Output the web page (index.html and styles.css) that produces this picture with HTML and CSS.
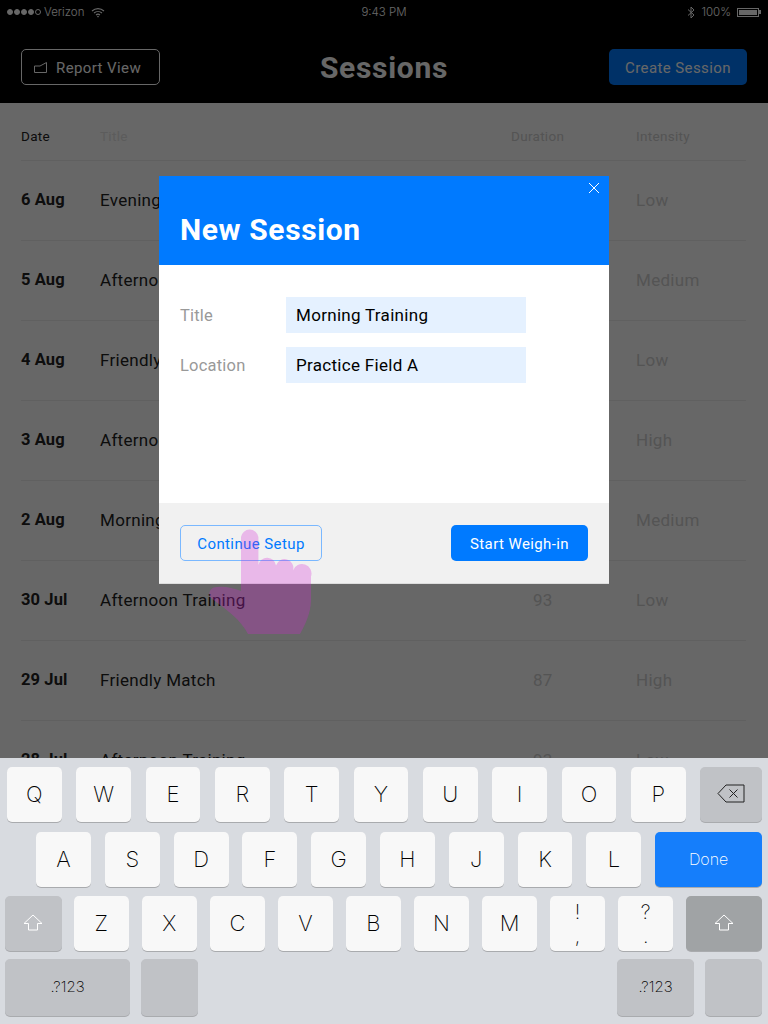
FILE: index.html
```html
<!DOCTYPE html>
<html lang="en">
<head>
  <meta charset="UTF-8" />
  <meta name="viewport" content="width=device-width, initial-scale=1.0"/>
  <title>Sessions</title>
  <link rel="stylesheet" href="styles.css">
</head>
<body>

<div class="screen">

  <!-- Status bar -->
  <div class="status-bar">
    <div class="status-left">
      <span class="signal"><i></i><i></i><i></i><i></i><i class="off"></i></span>
      <span>Verizon</span>
      <svg class="wifi" width="14" height="11" viewBox="0 0 14 11" fill="none" stroke="#fff" stroke-width="1.1">
        <path d="M1 4 C4.5 .8 9.5 .8 13 4"/>
        <path d="M3 6 C5.3 4 8.7 4 11 6"/>
        <path d="M5 8 C6.2 7 7.8 7 9 8"/>
        <circle cx="7" cy="9.6" r=".8" fill="#fff" stroke="none"/>
      </svg>
    </div>
    <div class="status-time">9:43 PM</div>
    <div class="status-right">
      <svg width="8" height="13" viewBox="0 0 8 13" fill="none" stroke="#fff" stroke-width="1">
        <path d="M1 3.5 L7 9 L4 12 V1 L7 4 L1 9.5"/>
      </svg>
      <span>100%</span>
      <span class="battery"><i></i></span>
    </div>
  </div>

  <!-- Header -->
  <header class="top-bar">
    <button class="btn-report">
      <svg width="13" height="11" viewBox="0 0 13 11" fill="none" stroke="#fff" stroke-width="1">
        <path d="M.5 4 L6 4 L12.5 .5 V10.5 H.5 Z"/>
      </svg>
      Report View
    </button>
    <h1>Sessions</h1>
    <button class="btn-create">Create Session</button>
  </header>

  <!-- Sessions list -->
  <div class="sessions">
    <div class="row head">
      <span class="date">Date</span>
      <span>Title</span>
      <span class="dim">Duration</span>
      <span class="dim">Intensity</span>
    </div>
    <div class="row">
      <span class="date">6 Aug</span><span>Evening</span><span></span><span class="dim">Low</span>
    </div>
    <div class="row">
      <span class="date">5 Aug</span><span>Afternoon</span><span></span><span class="dim">Medium</span>
    </div>
    <div class="row">
      <span class="date">4 Aug</span><span>Friendly</span><span></span><span class="dim">Low</span>
    </div>
    <div class="row">
      <span class="date">3 Aug</span><span>Afternoon</span><span></span><span class="dim">High</span>
    </div>
    <div class="row">
      <span class="date">2 Aug</span><span>Morning</span><span></span><span class="dim">Medium</span>
    </div>
    <div class="row">
      <span class="date">30 Jul</span><span>Afternoon Training</span><span class="dim num">93</span><span class="dim">Low</span>
    </div>
    <div class="row">
      <span class="date">29 Jul</span><span>Friendly Match</span><span class="dim num">87</span><span class="dim">High</span>
    </div>
    <div class="row">
      <span class="date">28 Jul</span><span>Afternoon Training</span><span class="dim num">93</span><span class="dim">Low</span>
    </div>
  </div>

  <div class="scrim"></div>

  <!-- New session dialog -->
  <div class="modal">
    <div class="modal-head">
      <svg class="modal-close" width="12" height="12" viewBox="0 0 12 12" stroke="#fff" stroke-width="1">
        <path d="M1 1 L11 11 M11 1 L1 11"/>
      </svg>
      <h2>New Session</h2>
    </div>
    <div class="modal-body">
      <div class="form-group">
        <label>Title</label>
        <div class="field">Morning Training</div>
      </div>
      <div class="form-group">
        <label>Location</label>
        <div class="field">Practice Field A</div>
      </div>
    </div>
    <div class="modal-foot">
      <button class="btn-outline">Continue Setup</button>
      <button class="btn-primary">Start Weigh-in</button>
    </div>
  </div>

  <!-- Touch hint -->
  <svg class="hand" width="110" height="112" viewBox="0 0 110 112">
    <path d="M36 66 L36 12 A8.8 8.8 0 0 1 53.4 12 L53.4 40 A8.9 8.9 0 0 1 71 40.5 A8.7 8.7 0 0 1 88 45.5 A9 9 0 0 1 106 51.5 L106 75 C106 88 100 100 95 109 L43 109 C36 95 22 85 6 73 C3 70 4 62 12 62 C20 61 28 63 36 66 Z"/>
  </svg>

  <!-- Keyboard -->
  <div class="keyboard">
    <div class="key-row row-1">
      <div class="key">Q</div><div class="key">W</div><div class="key">E</div><div class="key">R</div><div class="key">T</div>
      <div class="key">Y</div><div class="key">U</div><div class="key">I</div><div class="key">O</div><div class="key">P</div>
      <div class="key special backspace">
        <svg width="28" height="19" viewBox="0 0 28 19" fill="none" stroke="#222" stroke-width="1">
          <path d="M9 1 H27 V18 H9 L1 9.5 Z"/>
          <path d="M12.5 5.5 L20.5 13.5 M20.5 5.5 L12.5 13.5"/>
        </svg>
      </div>
    </div>
    <div class="key-row row-2">
      <div class="key">A</div><div class="key">S</div><div class="key">D</div><div class="key">F</div><div class="key">G</div>
      <div class="key">H</div><div class="key">J</div><div class="key">K</div><div class="key">L</div>
      <div class="key done">Done</div>
    </div>
    <div class="key-row row-3">
      <div class="key special shift">
        <svg width="20" height="17" viewBox="0 0 20 17" fill="none" stroke="#fff" stroke-width="1">
          <path d="M10 1 L19 9.5 H14.5 V16 H5.5 V9.5 H1 Z"/>
        </svg>
      </div>
      <div class="key">Z</div><div class="key">X</div><div class="key">C</div><div class="key">V</div><div class="key">B</div>
      <div class="key">N</div><div class="key">M</div>
      <div class="key stacked"><span>!</span><span>,</span></div>
      <div class="key stacked"><span>?</span><span>.</span></div>
      <div class="key special shift-on">
        <svg width="20" height="17" viewBox="0 0 20 17" fill="none" stroke="#fff" stroke-width="1">
          <path d="M10 1 L19 9.5 H14.5 V16 H5.5 V9.5 H1 Z"/>
        </svg>
      </div>
    </div>
    <div class="key-row row-4">
      <div class="key special num-left">.?123</div>
      <div class="key special blank"></div>
      <div class="key special num-right">.?123</div>
      <div class="key special blank"></div>
    </div>
  </div>

</div>

</body>
</html>
```

FILE: styles.css
```css
* {
  box-sizing: border-box;
}
body {
  margin: 0;
  font-family: Roboto, "Liberation Sans", sans-serif;
  background-color: #fff;
}
button {
  font-family: inherit;
  letter-spacing: .4px;
}
.screen {
  position: relative;
  width: 768px;
  height: 1024px;
  overflow: hidden;
}

/* status bar */
.status-bar {
  height: 24px;
  background-color: #000;
  color: #fff;
  font-family: Inter, "Liberation Sans", sans-serif;
  font-weight: 300;
  font-size: 11.5px;
  display: flex;
  align-items: center;
  justify-content: space-between;
  padding: 0 9px 0 7px;
  position: relative;
}
.status-left, .status-right {
  display: flex;
  align-items: center;
}
.status-left {
  gap: 3px;
}
.wifi {
  margin-left: 4px;
}
.status-right {
  gap: 6px;
}
.status-time {
  position: absolute;
  left: 0;
  right: 0;
  text-align: center;
}
.signal {
  display: flex;
  gap: 1px;
}
.signal i {
  width: 6px;
  height: 6px;
  border-radius: 50%;
  background-color: #fff;
  border: 1px solid #fff;
}
.signal i.off {
  background-color: transparent;
}
.battery {
  width: 22px;
  height: 9px;
  border: 1px solid #fff;
  padding: 1px;
  position: relative;
}
.battery i {
  display: block;
  height: 100%;
  background-color: #fff;
}
.battery::after {
  content: "";
  position: absolute;
  right: -3px;
  top: 1.5px;
  width: 2px;
  height: 4px;
  background-color: #fff;
}

/* header */
.top-bar {
  height: 79px;
  background-color: #000;
  display: flex;
  align-items: center;
  justify-content: space-between;
  padding: 7px 21px 0;
  position: relative;
}
.top-bar h1 {
  position: absolute;
  left: 0;
  right: 0;
  top: 24px;
  margin: 0;
  text-align: center;
  color: #fff;
  font-size: 30px;
  line-height: 40px;
  font-weight: 700;
  letter-spacing: .7px;
}
.btn-report {
  width: 139px;
  height: 36px;
  background: none;
  border: 1px solid #fff;
  border-radius: 5px;
  color: #fff;
  font-size: 15px;
  display: flex;
  align-items: center;
  gap: 9px;
  padding: 1px 0 0 12px;
}
.btn-create {
  width: 138px;
  height: 36px;
  background-color: #007aff;
  border: none;
  border-radius: 5px;
  color: #fff;
  font-size: 15px;
  padding: 1px 0 0;
}

/* sessions list */
.sessions {
  padding: 0 22px 0 21px;
}
.row {
  display: grid;
  grid-template-columns: 79px 411px 125px 1fr;
  align-items: center;
  height: 80px;
  padding-bottom: 2px;
  border-bottom: 1px solid #eee;
  font-size: 17px;
  color: #222;
  white-space: nowrap;
  letter-spacing: .3px;
}
.row.head {
  height: 58px;
  padding: 9px 0 0;
  font-size: 13.5px;
  color: #e3e3e3;
}
.date {
  font-size: 16.5px;
  font-weight: 700;
  letter-spacing: .1px;
  color: #222;
}
.row.head .date {
  font-size: 13.5px;
  font-weight: 400;
  letter-spacing: .3px;
}
.dim {
  color: #cfcfcf;
}
.num {
  padding-left: 22px;
}

/* dim layer over the page */
.scrim {
  position: absolute;
  top: 0;
  left: 0;
  right: 0;
  bottom: 0;
  background-color: rgba(0, 0, 0, 0.595);
}

/* dialog */
.modal {
  position: absolute;
  left: 159px;
  top: 176px;
  width: 450px;
  height: 408px;
  display: flex;
  flex-direction: column;
  background-color: #fff;
}
.modal-head {
  position: relative;
  height: 89px;
  background-color: #007aff;
  padding: 33px 21px 0;
}
.modal-head h2 {
  margin: 0;
  color: #fff;
  font-size: 30px;
  line-height: 42px;
  font-weight: 700;
  letter-spacing: .6px;
}
.modal-close {
  position: absolute;
  top: 6px;
  right: 9px;
}
.modal-body {
  flex: 1;
  padding: 32px 21px 0;
  display: flex;
  flex-direction: column;
  gap: 14px;
}
.form-group {
  display: flex;
  align-items: center;
}
label {
  width: 106px;
  font-size: 16.5px;
  color: #999;
  letter-spacing: .2px;
}
.field {
  width: 240px;
  height: 36px;
  line-height: 36px;
  padding: 0 10px;
  background-color: #e5f1ff;
  font-size: 17px;
  color: #000;
  letter-spacing: .3px;
}
.modal-foot {
  height: 81px;
  background-color: #f1f1f1;
  border-bottom: 1px solid #ddd;
  display: flex;
  justify-content: space-between;
  padding: 22px 21px 0;
}
.btn-outline, .btn-primary {
  height: 36px;
  border-radius: 5px;
  font-size: 15px;
  padding: 1px 0 0;
}
.btn-outline {
  width: 142px;
  background: none;
  border: 1px solid #7ab8ff;
  color: #007aff;
}
.btn-primary {
  width: 137px;
  background-color: #007aff;
  border: none;
  color: #fff;
}

/* touch hint */
.hand {
  position: absolute;
  left: 205px;
  top: 525px;
  fill: rgba(212, 37, 212, 0.28);
}

/* keyboard */
.keyboard {
  position: absolute;
  left: 0;
  right: 0;
  bottom: 0;
  height: 266px;
  padding-top: 9px;
  background-color: #d8dbe0;
  font-family: Inter, "Liberation Sans", sans-serif;
  font-weight: 250;
  color: #000;
}
.key-row {
  display: flex;
  height: 55px;
}
.row-1 {
  padding: 0 6px 0 7px;
  gap: 14.6px;
  margin-bottom: 10px;
}
.row-2 {
  padding: 0 6px 0 36px;
  gap: 13.9px;
  margin-bottom: 9px;
}
.row-3 {
  padding: 0 6px 0 5px;
  gap: 13.2px;
  margin-bottom: 8px;
}
.row-4 {
  height: 57px;
  padding: 0 6px 0 5px;
}
.key {
  width: 55px;
  height: 100%;
  background-color: #f8f8f8;
  border-radius: 5px;
  box-shadow: 0 1px 0 #a9abae;
  display: flex;
  align-items: center;
  justify-content: center;
  font-size: 22px;
  padding-bottom: 2px;
}
.stacked {
  flex-direction: column;
  font-size: 20px;
  line-height: 24px;
  padding-bottom: 0;
}
.special {
  background-color: #c0c2c6;
}
.backspace {
  width: 62px;
  margin-left: auto;
}
.done {
  width: 107px;
  margin-left: auto;
  background-color: #157efb;
  color: #fff;
  font-size: 16px;
}
.shift {
  width: 57px;
  margin-right: -1.2px;
}
.shift-on {
  width: 76px;
  margin-left: auto;
  background-color: #a0a3a5;
}
.num-left {
  width: 125px;
  font-size: 15px;
}
.num-right {
  width: 77px;
  font-size: 15px;
  margin-left: auto;
}
.row-4 .blank:nth-child(2) {
  width: 57px;
  margin-left: 11px;
}
.row-4 .blank:nth-child(4) {
  width: 57px;
  margin-left: 11px;
}
```
